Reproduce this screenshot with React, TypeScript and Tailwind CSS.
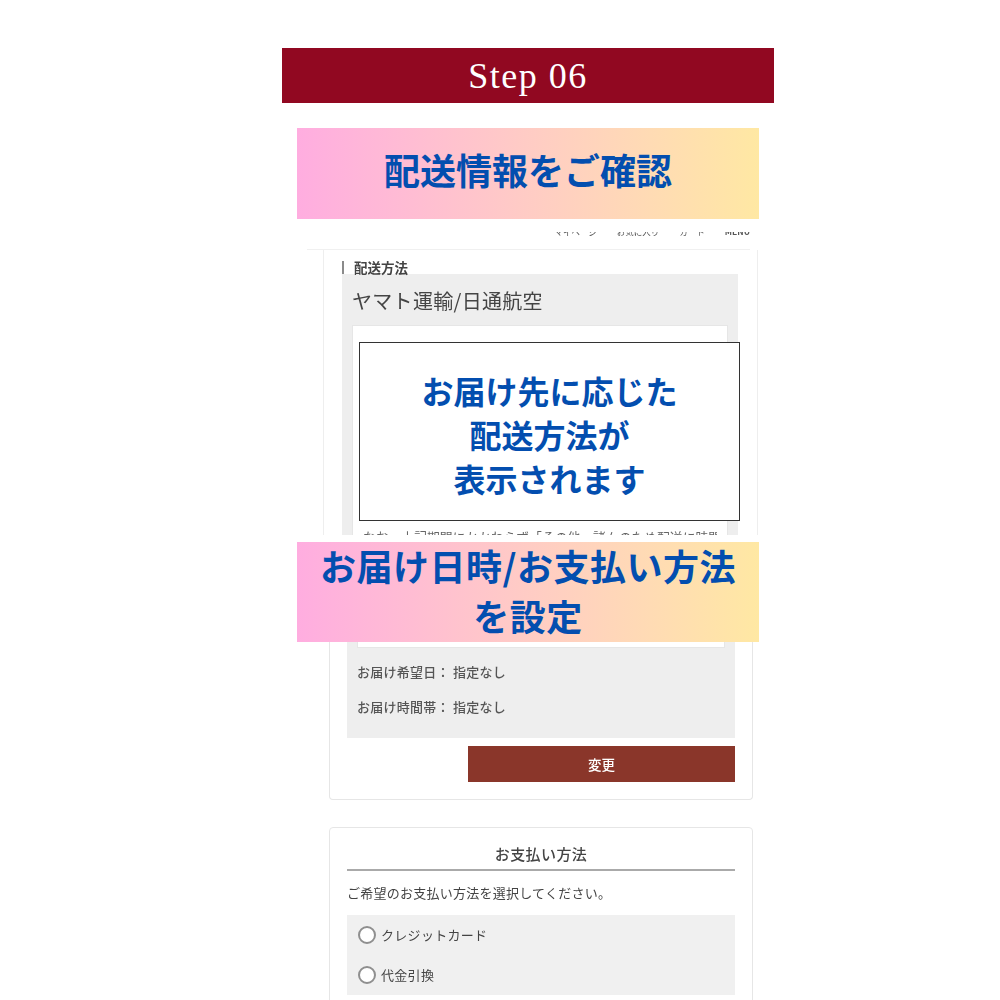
const jp = "font-['Noto_Sans_CJK_JP','Noto_Sans',sans-serif]";

function Banner({ lines, className }: { lines: string[]; className: string }) {
  return (
    <div className={`mx-[15px] flex flex-col items-center justify-center bg-gradient-to-r from-[#ffade0] to-[#ffe8a3] text-[#034eaf] font-bold text-[36px] ${className}`}>
      {lines.map((l) => (
        <div key={l} className="leading-[50px] whitespace-nowrap">{l}</div>
      ))}
    </div>
  );
}

function Radio({ label }: { label: string }) {
  return (
    <div className="flex items-center gap-[5px] h-[40px]">
      <span className="w-[18px] h-[18px] rounded-full border-2 border-[#8f8f8f] bg-white" />
      <span className="text-[13px] text-[#444] tracking-[0.3px]">{label}</span>
    </div>
  );
}

export default function App() {
  return (
    <div className={`w-[1000px] h-[1000px] overflow-hidden bg-white ${jp}`}>
      <div className="ml-[282px] w-[492px] pt-[48px]">
        <div className="h-[55px] bg-[#910821] flex items-center justify-center text-white text-[36px] font-['Liberation_Serif',serif] tracking-[1.5px]">
          Step 06
        </div>
        <Banner lines={["配送情報をご確認"]} className="mt-[25px] h-[91px] pb-[10px]" />

        {/* upper screenshot */}
        <div className="relative h-[316px] overflow-hidden">
          <div className="blur-[0.4px]">
            <div className="ml-[25px] w-[443px] h-[31px] border-b border-[#f0f0f0] flex justify-end items-end">
              <div className="flex gap-[20px] mb-[13px] h-[4px] overflow-hidden items-end text-[8.5px] leading-[10px] text-[#555]">
                <span>マイページ</span>
                <span>お気に入り</span>
                <span>カート</span>
                <span className="font-bold">MENU</span>
              </div>
            </div>
            <div className="ml-[41px] w-[435px] h-[285px] border-x border-[#eeeeee] pl-[18px] pr-[18px]">
              <div className="h-[24px] pt-[9px] flex items-start">
                <span className="w-[2px] h-[13px] bg-[#8a8a8a] mt-[2px]" />
                <span className="ml-[10px] text-[13.5px] leading-[16px] font-bold text-[#444]">配送方法</span>
              </div>
              <div className="w-[396px] h-[270px] bg-[#eeeeee] px-[10px] pt-[13px]">
                <div className="text-[20px] leading-[28px] tracking-[0.3px] text-[#444]">ヤマト運輸/日通航空</div>
                <div className="mt-[10px] h-[220px] bg-white border border-[#e6e6e6] px-[10px] pt-[204px]">
                  <div className="text-[12.8px] leading-[14px] h-[6px] overflow-hidden text-[#666] whitespace-nowrap">
                    なお、上記期間にかかわらず「その他」諸々のため配送に時間
                  </div>
                </div>
              </div>
            </div>
          </div>
          <div className="absolute left-[77px] top-[123px] w-[381px] h-[179px] border border-[#333] bg-white flex flex-col items-center justify-center pt-[5px] text-[#034eaf] font-bold text-[32px] leading-[44px]">
            <div>お届け先に応じた</div>
            <div>配送方法が</div>
            <div>表示されます</div>
          </div>
        </div>

        <Banner lines={["お届け日時/お支払い方法", "を設定"]} className="relative z-10 mt-[7px] h-[100px] pb-[5px] tracking-[0.5px]" />

        {/* lower screenshot */}
        <div className="blur-[0.4px]">
          <div className="-mt-[8px] ml-[47px] w-[424px] h-[166px] rounded-b-[4px] border border-t-0 border-[#e6e6e6] px-[17px] flex flex-col">
            <div className="w-[388px] h-[104px] bg-[#eeeeee] px-[10px]">
              <div className="h-[14px] bg-white border border-t-0 border-[#e6e6e6]" />
              <div className="mt-[14px] text-[13px] leading-[20px] tracking-[0.25px] font-medium text-[#555]">お届け希望日： 指定なし</div>
              <div className="mt-[15px] text-[13px] leading-[20px] tracking-[0.25px] font-medium text-[#555]">お届け時間帯： 指定なし</div>
            </div>
            <div className="self-end mt-[8px] w-[267px] h-[36px] bg-[#8a362a] text-white text-[13.5px] font-medium flex items-center justify-center">
              変更
            </div>
          </div>

          <div className="mt-[27px] ml-[47px] w-[424px] h-[200px] rounded-[4px] border border-[#e6e6e6] px-[17px]">
            <div className="h-[43px] border-b-2 border-[#aaaaaa] flex items-start justify-center pt-[16px] text-[15px] leading-[20px] tracking-[0.4px] font-medium text-[#444]">
              お支払い方法
            </div>
            <div className="mt-[12px] text-[13px] leading-[20px] tracking-[0.25px] text-[#444]">ご希望のお支払い方法を選択してください。</div>
            <div className="mt-[12px] h-[80px] bg-[#f0f0f0] px-[11px]">
              <Radio label="クレジットカード" />
              <Radio label="代金引換" />
            </div>
          </div>
        </div>
      </div>
    </div>
  );
}
